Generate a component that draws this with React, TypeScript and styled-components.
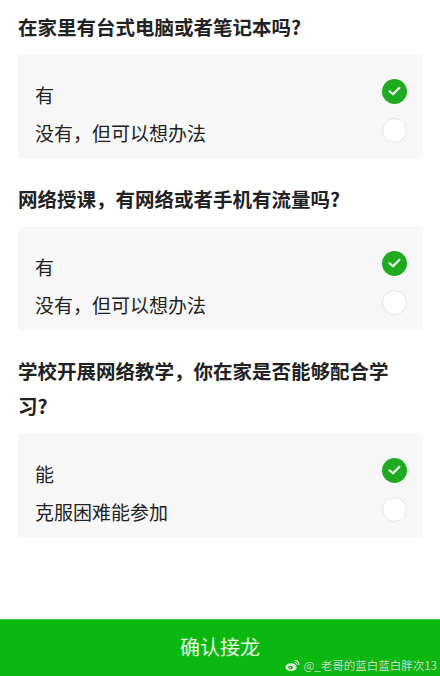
import { createGlobalStyle } from "styled-components";
import styled from "styled-components";

const GlobalStyle = createGlobalStyle`
  html, body {
    margin: 0;
    padding: 0;
    background: #ffffff;
  }
  body {
    font-family: "Noto Sans CJK SC", "Noto Sans", sans-serif;
    color: #222222;
  }
`;

const Page = styled.div`
  height: 100vh;
  display: flex;
  flex-direction: column;
  overflow: hidden;
`;

const Content = styled.div`
  flex: 1;
  padding: 9px 17px 0 18px;
`;

const Section = styled.section`
  margin-bottom: 23px;
`;

const Title = styled.h2`
  margin: 0 0 11px;
  padding-right: 26px;
  font-size: 19.5px;
  line-height: 35px;
  font-weight: 700;
  color: #222;
`;

const Card = styled.div`
  background: #f7f7f7;
  padding: 19px 16px 8px 17px;
`;

const Row = styled.div`
  height: 38px;
  display: flex;
  align-items: center;
  justify-content: space-between;
`;

const Label = styled.span`
  font-size: 19px;
  color: #222;
  padding-top: 2px;
`;

const Radio = styled.span<{ $checked: boolean }>`
  width: 25px;
  height: 25px;
  border-radius: 50%;
  box-sizing: border-box;
  display: flex;
  align-items: center;
  justify-content: center;
  margin-top: ${(p) => (p.$checked ? "-4px" : "-2px")};
  background: ${(p) => (p.$checked ? "#1fab1f" : "#ffffff")};
  border: ${(p) => (p.$checked ? "none" : "1px solid #e4e4e4")};
`;

const Footer = styled.div`
  position: relative;
  height: 56px;
  background: #0bb80f;
  border-top: 1px solid #3ec43f;
  display: flex;
  align-items: center;
  justify-content: center;
`;

const Confirm = styled.span`
  font-size: 20px;
  color: #e6f6e3;
  margin-top: -4px;
`;

const Watermark = styled.span`
  position: absolute;
  right: 3px;
  bottom: 3px;
  display: flex;
  align-items: center;
  gap: 3px;
  font-size: 11.5px;
  color: rgba(255, 255, 255, 0.78);
  text-shadow: 0 0 1px rgba(0, 0, 0, 0.3);
`;

const Check = () => (
  <svg width="13" height="10" viewBox="0 0 13 10">
    <path
      d="M1.5 5.2 L5 8.3 L11.5 1.8"
      fill="none"
      stroke="#ffffff"
      strokeWidth="2"
      strokeLinecap="round"
      strokeLinejoin="round"
    />
  </svg>
);

const WeiboLogo = () => (
  <svg width="15" height="13" viewBox="0 0 15 13">
    <ellipse cx="6" cy="8.2" rx="5.6" ry="3.9" fill="rgba(255,255,255,0.85)" />
    <ellipse cx="5.6" cy="8.6" rx="2.4" ry="1.8" fill="#3a8d2a" />
    <circle cx="5.3" cy="8.8" r="0.8" fill="#ffffff" />
    <path d="M10 1.5 A4 4 0 0 1 13.8 5.5" fill="none" stroke="rgba(255,255,255,0.85)" strokeWidth="1.2" strokeLinecap="round" />
    <path d="M10 3.4 A2 2 0 0 1 12 5.4" fill="none" stroke="rgba(255,255,255,0.85)" strokeWidth="1" strokeLinecap="round" />
  </svg>
);

const questions = [
  {
    title: "在家里有台式电脑或者笔记本吗?",
    options: ["有", "没有，但可以想办法"],
  },
  {
    title: "网络授课，有网络或者手机有流量吗?",
    options: ["有", "没有，但可以想办法"],
  },
  {
    title: "学校开展网络教学，你在家是否能够配合学习?",
    options: ["能", "克服困难能参加"],
  },
];

export default function App() {
  return (
    <Page>
      <GlobalStyle />
      <Content>
        {questions.map((q, i) => (
          <Section key={i}>
            <Title>{q.title}</Title>
            <Card>
              {q.options.map((o, j) => (
                <Row key={j}>
                  <Label>{o}</Label>
                  <Radio $checked={j === 0}>{j === 0 && <Check />}</Radio>
                </Row>
              ))}
            </Card>
          </Section>
        ))}
      </Content>
      <Footer>
        <Confirm>确认接龙</Confirm>
        <Watermark>
          <WeiboLogo />
          @_老哥的蓝白蓝白胖次13
        </Watermark>
      </Footer>
    </Page>
  );
}
